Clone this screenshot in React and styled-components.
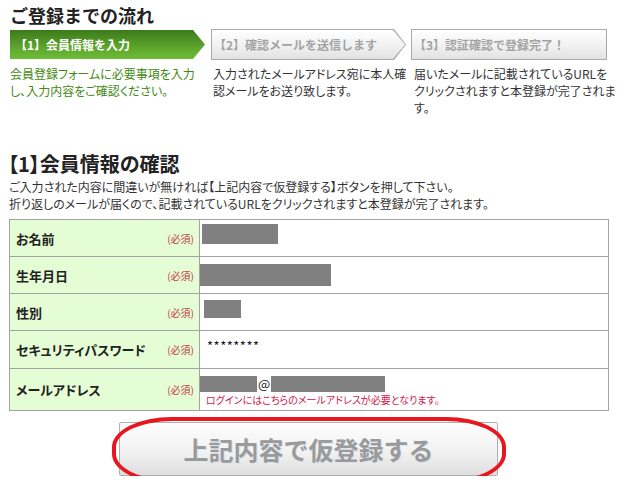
import React from "react";
import styled, { createGlobalStyle } from "styled-components";

const GlobalStyle = createGlobalStyle`
  body {
    margin: 0;
    background: #fff;
    font-family: "Noto Sans CJK JP", "Noto Sans", sans-serif;
    color: #333;
  }
`;

const Page = styled.div`
  width: 624px;
  padding: 2px 0 0 9px;
  box-sizing: border-box;
`;

const Title = styled.h2`
  margin: 0 0 1px 1px;
  font-size: 18px;
  line-height: 26px;
  font-weight: 700;
  color: #222;
`;

const Steps = styled.div`
  display: flex;
  gap: 5px;
  height: 31px;
`;

const arrow = "polygon(0 0, calc(100% - 12px) 0, 100% 50%, calc(100% - 12px) 100%, 0 100%)";

const StepFrame = styled.div`
  width: ${(p) => p.$w}px;
  height: 31px;
  box-sizing: border-box;
  padding: 1px;
  background: ${(p) => (p.$active ? "transparent" : "#a9a9a9")};
  clip-path: ${(p) => (p.$arrow ? arrow : "none")};
`;

const StepFace = styled.div`
  height: 100%;
  display: flex;
  align-items: center;
  padding-left: ${(p) => (p.$active ? 5 : 2)}px;
  font-size: 12px;
  font-weight: 700;
  white-space: nowrap;
  color: ${(p) => (p.$active ? "#fff" : "#a3a3a3")};
  background: ${(p) =>
    p.$active
      ? "linear-gradient(#3c7a1b, #5ea52d 60%, #6dbd36)"
      : "linear-gradient(#ffffff, #f1f1f1 55%, #e2e2e2)"};
  clip-path: ${(p) => (p.$arrow ? arrow : "none")};
`;

const Descs = styled.div`
  display: flex;
  gap: 5px;
  padding-top: 5px;
`;

const Desc = styled.p`
  margin: 0;
  width: ${(p) => p.$w}px;
  padding-left: 1px;
  font-size: 12px;
  line-height: 17px;
  white-space: nowrap;
  font-feature-settings: "palt";
  color: ${(p) => (p.$active ? "#3f8a10" : "#333")};
`;

const Heading = styled.h3`
  margin: 34px 0 0 -1px;
  font-size: 20px;
  line-height: 28px;
  font-weight: 700;
  font-feature-settings: "palt";
  color: #222;
`;

const Lead = styled.p`
  margin: 0 0 7px 0;
  font-size: 12px;
  line-height: 17px;
  font-feature-settings: "palt";
  color: #333;
  white-space: nowrap;
`;

const Table = styled.table`
  width: 600px;
  border-collapse: collapse;
  border: 1px solid #a3a3a3;
`;

const Row = styled.tr`
  height: ${(p) => p.$h}px;
`;

const Label = styled.th`
  width: 190px;
  box-sizing: border-box;
  background: #e5fdd5;
  border: 1px solid #a3a3a3;
  padding: 0 5px 0 6px;
  text-align: left;
  vertical-align: middle;
`;

const LabelInner = styled.div`
  display: flex;
  justify-content: space-between;
  align-items: center;
`;

const LabelText = styled.span`
  font-size: 13px;
  font-weight: 700;
  color: #222;
  font-feature-settings: "palt";
`;

const Required = styled.span`
  font-size: 10px;
  font-weight: 400;
  color: #c23b4a;
`;

const Value = styled.td`
  border: 1px solid #a3a3a3;
  padding: 0;
  vertical-align: ${(p) => (p.$top ? "top" : "middle")};
`;

const Redact = styled.span`
  display: inline-block;
  vertical-align: middle;
  width: ${(p) => p.$w}px;
  height: ${(p) => p.$h}px;
  margin-left: ${(p) => p.$l || 0}px;
  margin-top: ${(p) => p.$t || 0}px;
  background: #808080;
`;

const Masked = styled.div`
  padding: 8px 0 0 7px;
  font-size: 13px;
  letter-spacing: 0.5px;
  line-height: 14px;
  color: #222;
`;

const MailLine = styled.div`
  display: flex;
  align-items: center;
  height: 17px;
  margin-top: 6px;
  font-size: 13px;
  line-height: 15px;
  color: #222;
`;

const At = styled.span`
  margin: 0 1px;
  line-height: 15px;
`;

const Note = styled.div`
  padding-left: 6px;
  font-size: 10px;
  line-height: 14px;
  color: #d0174a;
  font-feature-settings: "palt";
  margin: 1px 0 1px;
`;

const ButtonArea = styled.div`
  width: 600px;
  display: flex;
  justify-content: center;
  padding-top: 11px;
`;

const ButtonWrap = styled.div`
  position: relative;
  margin-left: -1px;
`;

const Submit = styled.button`
  width: 379px;
  height: 54px;
  border: 1px solid #b0b0b0;
  border-radius: 2px;
  background: linear-gradient(#fdfdfd, #f2f2f2 55%, #dedede);
  font-family: "Noto Sans CJK JP", sans-serif;
  font-size: 25px;
  font-weight: 700;
  color: #9a9a9a;
  text-shadow: 1px 1px 0 #dbe6f0;
  cursor: pointer;
`;

const Ring = styled.div`
  position: absolute;
  left: -7px;
  right: -8px;
  top: -5px;
  bottom: -8px;
  border: 4px solid #e8161f;
  border-radius: 60px / 30px;
  pointer-events: none;
`;

export default function App() {
  return (
    <>
      <GlobalStyle />
      <Page>
        <Title>ご登録までの流れ</Title>
        <Steps>
          <StepFrame $w={197} $active $arrow>
            <StepFace $active $arrow>【1】会員情報を入力</StepFace>
          </StepFrame>
          <StepFrame $w={195} $arrow>
            <StepFace $arrow>【2】確認メールを送信します</StepFace>
          </StepFrame>
          <StepFrame $w={196}>
            <StepFace>【3】認証確認で登録完了！</StepFace>
          </StepFrame>
        </Steps>
        <Descs>
          <Desc $w={197} $active>
            会員登録フォームに必要事項を入力
            <br />
            し、入力内容をご確認ください。
          </Desc>
          <Desc $w={195}>
            入力されたメールアドレス宛に本人確
            <br />
            認メールをお送り致します。
          </Desc>
          <Desc $w={196}>
            届いたメールに記載されているURLを
            <br />
            クリックされますと本登録が完了されま
            <br />す。
          </Desc>
        </Descs>

        <Heading>【1】会員情報の確認</Heading>
        <Lead>
          ご入力された内容に間違いが無ければ【上記内容で仮登録する】ボタンを押して下さい。
          <br />
          折り返しのメールが届くので、記載されているURLをクリックされますと本登録が完了されます。
        </Lead>

        <Table>
          <tbody>
            <Row $h={37}>
              <Label>
                <LabelInner>
                  <LabelText>お名前</LabelText>
                  <Required>(必須)</Required>
                </LabelInner>
              </Label>
              <Value>
                <Redact $w={76} $h={20} $l={2} $t={-13} />
              </Value>
            </Row>
            <Row $h={37}>
              <Label>
                <LabelInner>
                  <LabelText>生年月日</LabelText>
                  <Required>(必須)</Required>
                </LabelInner>
              </Label>
              <Value>
                <Redact $w={131} $h={22} $t={-6} />
              </Value>
            </Row>
            <Row $h={37}>
              <Label>
                <LabelInner>
                  <LabelText>性別</LabelText>
                  <Required>(必須)</Required>
                </LabelInner>
              </Label>
              <Value>
                <Redact $w={37} $h={18} $l={4} $t={-11} />
              </Value>
            </Row>
            <Row $h={38}>
              <Label>
                <LabelInner>
                  <LabelText>セキュリティパスワード</LabelText>
                  <Required>(必須)</Required>
                </LabelInner>
              </Label>
              <Value $top>
                <Masked>********</Masked>
              </Value>
            </Row>
            <Row $h={42}>
              <Label>
                <LabelInner>
                  <LabelText>メールアドレス</LabelText>
                  <Required>(必須)</Required>
                </LabelInner>
              </Label>
              <Value $top>
                <MailLine>
                  <Redact $w={57} $h={16} />
                  <At>@</At>
                  <Redact $w={114} $h={16} />
                </MailLine>
                <Note>ログインにはこちらのメールアドレスが必要となります。</Note>
              </Value>
            </Row>
          </tbody>
        </Table>

        <ButtonArea>
          <ButtonWrap>
            <Submit type="button">上記内容で仮登録する</Submit>
            <Ring />
          </ButtonWrap>
        </ButtonArea>
      </Page>
    </>
  );
}
